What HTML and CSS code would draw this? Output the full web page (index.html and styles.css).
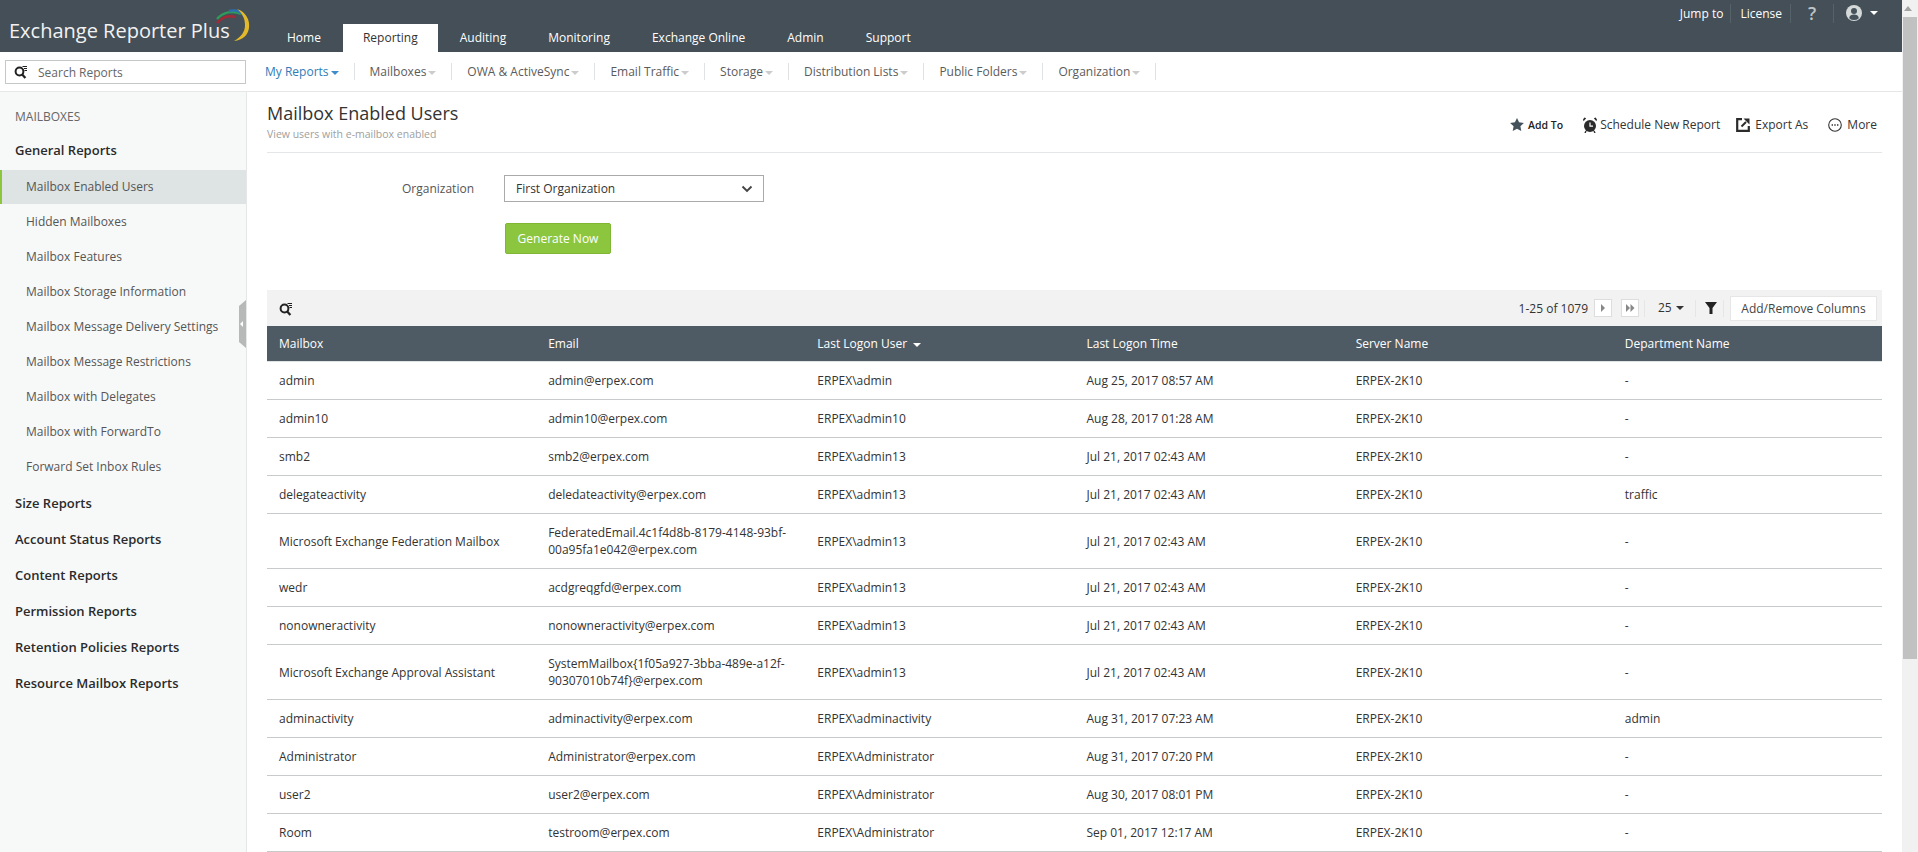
FILE: index.html
```html
<!DOCTYPE html>
<html lang="en">
<head>
<meta charset="utf-8">
<title>Exchange Reporter Plus</title>
<link rel="stylesheet" href="styles.css">
</head>
<body>
<div class="app">
  <div class="page">
    <header class="topbar">
      <div class="logo">
        <span class="logo-text">Exchange Reporter Plus</span>
        <svg class="logo-arc" width="38" height="36" viewBox="0 0 38 36" fill="none">
          <path d="M3 15C8 9 15 7 21 9" stroke="#a52a35" stroke-width="2.6"/>
          <path d="M3 11C9 4 19 2 27 6" stroke="#2f9a5b" stroke-width="2.4"/>
          <path d="M15 3C22 1 29 4 32 11" stroke="#2c6fb5" stroke-width="2.4"/>
          <path d="M23 1C32 4 36 12 35 20C34 27 29 32 20 33C27 29 31 24 31 17C31 10 28 5 23 1Z" fill="#e3b92b"/>
        </svg>
      </div>
      <nav class="tabs">
        <a class="tab">Home</a>
        <a class="tab tab-active">Reporting</a>
        <a class="tab">Auditing</a>
        <a class="tab">Monitoring</a>
        <a class="tab">Exchange Online</a>
        <a class="tab">Admin</a>
        <a class="tab">Support</a>
      </nav>
      <div class="tools">
        <a class="tool tool-jump">Jump to</a>
        <a class="tool tool-license">License</a>
        <a class="tool tool-help">?</a>
        <a class="tool tool-user">
          <svg width="16" height="16" viewBox="0 0 16 16">
            <circle cx="8" cy="8" r="8" fill="#d5dad9"/>
            <circle cx="8" cy="6" r="3" fill="#46535c"/>
            <path d="M3.2 13.2C3.6 10.4 5.6 9.6 8 9.6s4.4.8 4.8 3.6A7 7 0 0 1 3.2 13.2Z" fill="#46535c"/>
          </svg>
          <span class="caret caret-white"></span>
        </a>
      </div>
    </header>

    <div class="subbar">
      <div class="search-wrap">
        <div class="search">
          <svg class="search-icon" width="14" height="14" viewBox="0 0 14 14" fill="none">
            <circle cx="5.5" cy="6.5" r="3.9" stroke="#222" stroke-width="2"/>
            <path d="M8.2 9.4L11.4 13" stroke="#222" stroke-width="2.2"/>
            <path d="M8.5 1.5H13M10 3.5H13M10.5 5.5H13" stroke="#222" stroke-width="1"/>
          </svg>
          <span>Search Reports</span>
        </div>
      </div>
      <nav class="subnav">
        <a class="subitem subitem-active">My Reports<span class="caret caret-blue"></span></a>
        <a class="subitem">Mailboxes<span class="caret caret-grey"></span></a>
        <a class="subitem">OWA &amp; ActiveSync<span class="caret caret-grey"></span></a>
        <a class="subitem">Email Traffic<span class="caret caret-grey"></span></a>
        <a class="subitem">Storage<span class="caret caret-grey"></span></a>
        <a class="subitem">Distribution Lists<span class="caret caret-grey"></span></a>
        <a class="subitem">Public Folders<span class="caret caret-grey"></span></a>
        <a class="subitem">Organization<span class="caret caret-grey"></span></a>
      </nav>
    </div>

    <div class="body">
      <aside class="sidebar">
        <div class="side-title">MAILBOXES</div>
        <div class="side-head side-head-first">General Reports</div>
        <a class="side-item side-item-active">Mailbox Enabled Users</a>
        <a class="side-item">Hidden Mailboxes</a>
        <a class="side-item">Mailbox Features</a>
        <a class="side-item">Mailbox Storage Information</a>
        <a class="side-item">Mailbox Message Delivery Settings</a>
        <a class="side-item">Mailbox Message Restrictions</a>
        <a class="side-item">Mailbox with Delegates</a>
        <a class="side-item">Mailbox with ForwardTo</a>
        <a class="side-item">Forward Set Inbox Rules</a>
        <div class="side-head">Size Reports</div>
        <div class="side-head">Account Status Reports</div>
        <div class="side-head">Content Reports</div>
        <div class="side-head">Permission Reports</div>
        <div class="side-head">Retention Policies Reports</div>
        <div class="side-head">Resource Mailbox Reports</div>
        <div class="collapse"><span class="collapse-arrow"></span></div>
      </aside>

      <main class="main">
        <div class="title-row">
          <div>
            <h1 class="title">Mailbox Enabled Users</h1>
            <p class="subtitle">View users with e-mailbox enabled</p>
          </div>
          <div class="actions">
            <a class="action action-add">
              <svg width="14" height="13" viewBox="0 0 14 13"><path d="M7 0l2.1 4.3 4.8.7-3.500 3.300.9 4.700L7 10.800 2.700 13l.9-4.700L.1 5l4.800-.7z" fill="#44525c"/></svg>
              <span class="action-label-bold">Add To</span>
            </a>
            <a class="action action-schedule">
              <svg width="14" height="16" viewBox="0 0 14 16">
                <circle cx="7" cy="9" r="6" fill="#2b2b2b"/>
                <path d="M0.6 4.2L3.2 1.2 1.4 0.6 0 2.4ZM13.4 4.2L10.8 1.2 12.6 0.6 14 2.4Z" fill="#2b2b2b"/>
                <path d="M7 5.500V9.200H10" stroke="#fff" stroke-width="1.2" fill="none"/>
                <path d="M3 14L2 16M11 14L12 16" stroke="#2b2b2b" stroke-width="1.4"/>
              </svg>
              <span>Schedule New Report</span>
            </a>
            <a class="action action-export">
              <svg width="14" height="14" viewBox="0 0 14 14" fill="none">
                <path d="M6 1.200H1.200V12.800H12.800V8" stroke="#2b2b2b" stroke-width="2.2"/>
                <path d="M5.500 8.500L10 4" stroke="#2b2b2b" stroke-width="2"/>
                <path d="M7.500 0.500H13.500V6.500Z" fill="#2b2b2b"/>
              </svg>
              <span>Export As</span>
            </a>
            <a class="action action-more">
              <svg width="14" height="14" viewBox="0 0 14 14" fill="none">
                <circle cx="7" cy="7" r="6.300" stroke="#333" stroke-width="1.1"/>
                <path d="M3.600 7H5M6.300 7H7.700M9 7H10.400" stroke="#333" stroke-width="1.5"/>
              </svg>
              <span>More</span>
            </a>
          </div>
        </div>

        <div class="form-row">
          <label class="form-label">Organization</label>
          <div class="select">
            <span>First Organization</span>
            <svg width="12" height="8" viewBox="0 0 12 8" fill="none"><path d="M1.500 1.500L6 6l4.500-4.500" stroke="#444" stroke-width="1.9"/></svg>
          </div>
        </div>
        <button class="generate">Generate Now</button>

        <div class="toolbar">
          <svg class="toolbar-icon" width="14" height="14" viewBox="0 0 14 14" fill="none">
            <circle cx="5.500" cy="6.500" r="3.900" stroke="#222" stroke-width="2"/>
            <path d="M8.200 9.400L11.400 13" stroke="#222" stroke-width="2.2"/>
            <path d="M8.500 1.500H13M10 3.500H13M10.500 5.500H13" stroke="#222" stroke-width="1"/>
          </svg>
          <div class="pager">
            <span class="page-count">1-25 of 1079</span>
            <span class="page-btn"><svg width="6" height="8" viewBox="0 0 6 8"><path d="M1 0l4 4-4 4z" fill="#888"/></svg></span>
            <span class="page-btn page-btn-last"><svg width="9" height="8" viewBox="0 0 9 8"><path d="M0 0l4 4-4 4zM4.500 0l4 4-4 4z" fill="#888"/></svg></span>
            <span class="page-size">25<span class="caret caret-dark"></span></span>
            <span class="page-filter"><svg width="12" height="12" viewBox="0 0 12 12"><path d="M0 0h12L7.500 6v6h-3V6z" fill="#222"/></svg></span>
            <span class="page-columns">Add/Remove Columns</span>
          </div>
        </div>

        <table class="grid">
          <thead>
            <tr><th>Mailbox</th><th>Email</th><th>Last Logon User<span class="caret caret-white caret-sort"></span></th><th>Last Logon Time</th><th>Server Name</th><th>Department Name</th></tr>
          </thead>
          <tbody>
            <tr><td>admin</td><td>admin@erpex.com</td><td>ERPEX\admin</td><td>Aug 25, 2017 08:57 AM</td><td>ERPEX-2K10</td><td>-</td></tr>
            <tr><td>admin10</td><td>admin10@erpex.com</td><td>ERPEX\admin10</td><td>Aug 28, 2017 01:28 AM</td><td>ERPEX-2K10</td><td>-</td></tr>
            <tr><td>smb2</td><td>smb2@erpex.com</td><td>ERPEX\admin13</td><td>Jul 21, 2017 02:43 AM</td><td>ERPEX-2K10</td><td>-</td></tr>
            <tr><td>delegateactivity</td><td>deledateactivity@erpex.com</td><td>ERPEX\admin13</td><td>Jul 21, 2017 02:43 AM</td><td>ERPEX-2K10</td><td>traffic</td></tr>
            <tr><td>Microsoft Exchange Federation Mailbox</td><td>FederatedEmail.4c1f4d8b-8179-4148-93bf-00a95fa1e042@erpex.com</td><td>ERPEX\admin13</td><td>Jul 21, 2017 02:43 AM</td><td>ERPEX-2K10</td><td>-</td></tr>
            <tr><td>wedr</td><td>acdgreqgfd@erpex.com</td><td>ERPEX\admin13</td><td>Jul 21, 2017 02:43 AM</td><td>ERPEX-2K10</td><td>-</td></tr>
            <tr><td>nonowneractivity</td><td>nonowneractivity@erpex.com</td><td>ERPEX\admin13</td><td>Jul 21, 2017 02:43 AM</td><td>ERPEX-2K10</td><td>-</td></tr>
            <tr><td>Microsoft Exchange Approval Assistant</td><td>SystemMailbox{1f05a927-3bba-489e-a12f-90307010b74f}@erpex.com</td><td>ERPEX\admin13</td><td>Jul 21, 2017 02:43 AM</td><td>ERPEX-2K10</td><td>-</td></tr>
            <tr><td>adminactivity</td><td>adminactivity@erpex.com</td><td>ERPEX\adminactivity</td><td>Aug 31, 2017 07:23 AM</td><td>ERPEX-2K10</td><td>admin</td></tr>
            <tr><td>Administrator</td><td>Administrator@erpex.com</td><td>ERPEX\Administrator</td><td>Aug 31, 2017 07:20 PM</td><td>ERPEX-2K10</td><td>-</td></tr>
            <tr><td>user2</td><td>user2@erpex.com</td><td>ERPEX\Administrator</td><td>Aug 30, 2017 08:01 PM</td><td>ERPEX-2K10</td><td>-</td></tr>
            <tr><td>Room</td><td>testroom@erpex.com</td><td>ERPEX\Administrator</td><td>Sep 01, 2017 12:17 AM</td><td>ERPEX-2K10</td><td>-</td></tr>
          </tbody>
        </table>
      </main>
    </div>
  </div>
  <div class="scrollbar" aria-hidden="true">
    <span class="scroll-up"></span>
    <span class="scroll-thumb"></span>
  </div>
</div>
</body>
</html>
```
FILE: styles.css
```css
* { box-sizing: border-box; }
html, body { margin: 0; height: 100%; overflow: hidden; }
body { font-family: "Open Sans", "Liberation Sans", sans-serif; font-size: 12px; color: #333; background: #fff; }
a { color: inherit; text-decoration: none; }

.app { display: flex; height: 852px; }
.page { flex: 1; min-width: 0; height: 852px; overflow: hidden; display: flex; flex-direction: column; }

.scrollbar { width: 16px; flex: none; background: #f1f1f1; display: flex; flex-direction: column; align-items: flex-end; }
.scroll-up { width: 0; height: 0; margin: 6px 4px 6px 0; border-left: 4px solid transparent; border-right: 4px solid transparent; border-bottom: 5px solid #a3a3a3; align-self: center; }
.scroll-thumb { width: 14px; margin-right: 1px; height: 642px; background: #c1c1c1; }

.caret { display: inline-block; width: 0; height: 0; border-left: 4px solid transparent; border-right: 4px solid transparent; border-top: 4px solid #ccc; vertical-align: middle; }
.caret-blue { border-top-color: #3f8bc9; margin-left: 2px; }
.caret-grey { border-top-color: #ccc; margin-left: 2px; }
.caret-white { border-top-color: #fff; }
.caret-dark { border-top-color: #333; margin-left: 4px; }
.caret-sort { margin-left: 6px; }

.topbar { height: 52px; flex: none; background: #444f57; display: flex; color: #fff; }
.logo { width: 267px; flex: none; display: flex; align-items: flex-start; padding: 17px 0 0 9px; }
.logo-text { font-size: 20px; font-weight: 500; line-height: 27px; color: #f2f2f2; white-space: nowrap; }
.logo-arc { margin: -9px 0 0 -16px; flex: none; }
.tabs { display: flex; gap: 2px; align-self: flex-end; height: 28px; }
.tab { padding: 0 20px; line-height: 28px; color: #fff; white-space: nowrap; }
.tab-active { background: #fff; color: #333; }
.tools { margin-left: auto; height: 26px; display: flex; align-items: center; padding-right: 24px; }
.tool { display: flex; align-items: center; height: 19px; white-space: nowrap; border-right: 1px solid #56626a; }
.tool-jump { padding-right: 7px; }
.tool-license { padding: 0 8px 0 9px; }
.tool-help { font-size: 18px; font-weight: 600; width: 43px; justify-content: center; color: #bfc4c6; }
.tool-user { border-right: 0; padding-left: 12px; gap: 8px; }

.subbar { height: 40px; flex: none; display: flex; border-bottom: 1px solid #e4e6e7; }
.search-wrap { width: 250px; flex: none; padding: 8px 0 0 5px; }
.search { width: 241px; height: 24px; border: 1px solid #c4c8c9; display: flex; align-items: center; gap: 10px; padding-left: 8px; color: #666; }
.subnav { display: flex; align-items: center; height: 39px; }
.subitem { height: 17px; line-height: 17px; padding: 0 15px; border-right: 1px solid #e0e2e3; color: #5b5b5b; white-space: nowrap; }
.subitem-active { color: #2f7cb8; }

.body { flex: 1; min-height: 0; display: flex; }
.sidebar { width: 247px; flex: none; position: relative; background: #f7f9f9; border-right: 1px solid #e4e6e7; }
.side-title { height: 33px; padding: 16px 0 0 15px; line-height: 17px; color: #666; }
.side-head { height: 36px; line-height: 36px; padding-left: 15px; font-weight: 600; font-size: 13px; color: #2b2b2b; }
.side-head-first { height: 45px; line-height: 51px; }
.side-item + .side-head { margin-top: 1px; }
.side-item { display: block; height: 35px; line-height: 35px; padding-left: 26px; color: #555; }
.side-item-active { background: #dde4e3; border-left: 2px solid #8cc63f; padding-left: 24px; height: 34px; line-height: 34px; }
.collapse { position: absolute; right: 0; top: 208px; width: 7px; height: 48px; background: #b7b9b9; clip-path: polygon(0 6px, 100% 0, 100% 100%, 0 calc(100% - 6px)); display: flex; align-items: center; }
.collapse-arrow { width: 0; height: 0; border-top: 3px solid transparent; border-bottom: 3px solid transparent; border-right: 3px solid #fff; margin-left: 1px; }

.main { flex: 1; min-width: 0; padding: 0 20px; }
.title-row { height: 61px; display: flex; justify-content: space-between; border-bottom: 1px solid #e4e6e7; padding-top: 9px; }
.title { margin: 0; font-size: 18px; font-weight: 400; line-height: 24px; color: #333; }
.subtitle { margin: 2px 0 0; font-size: 10.500px; line-height: 15px; color: #a0a0a0; }
.actions { display: flex; align-items: center; height: 47px; padding-right: 5px; }
.action { display: flex; align-items: center; gap: 5px; white-space: nowrap; color: #333; }
.action-add { gap: 4px; }
.action-schedule { margin-left: 20px; gap: 3px; }
.action-export { margin-left: 16px; }
.action-more { margin-left: 20px; }
.action-label-bold { font-size: 10.500px; font-weight: 600; color: #222; }

.form-row { display: flex; align-items: center; gap: 30px; margin-top: 22px; height: 27px; }
.form-label { width: 207px; text-align: right; color: #555; }
.select { width: 260px; height: 27px; border: 1px solid #aaa; display: flex; align-items: center; justify-content: space-between; padding: 0 10px 0 11px; color: #333; }
.generate { display: block; margin: 21px 0 0 238px; width: 106px; height: 31px; border: 1px solid #7fb735; border-radius: 2px; background: #8cc63f; color: #fff; font: 12px "Open Sans", sans-serif; padding: 0; }

.toolbar { margin-top: 36px; height: 36px; background: #f2f2f2; display: flex; align-items: center; justify-content: space-between; padding: 0 5px 0 12px; }
.toolbar-icon { margin-top: 2px; }
.pager { display: flex; align-items: center; height: 25px; }
.page-count { margin-right: 6px; line-height: 17px; padding-top: 1px; }
.page-btn { width: 18px; height: 18px; background: #fff; border: 1px solid #ddd; display: flex; align-items: center; justify-content: center; }
.page-btn-last { margin-left: 9px; }
.page-size { margin-left: 5px; padding-left: 13px; width: 51px; height: 17px; line-height: 15px; border-left: 1px solid #e6e6e6; }
.page-filter { display: flex; width: 29px; height: 17px; align-items: center; padding-left: 9px; border-left: 1px solid #e6e6e6; border-right: 1px solid #e6e6e6; }
.page-columns { margin-left: 6px; width: 147px; height: 25px; line-height: 23px; text-align: center; background: #fff; border: 1px solid #e6e6e6; color: #444; }

.grid { width: 1615px; table-layout: fixed; border-collapse: separate; border-spacing: 0; }
.grid th { height: 36px; padding: 0 12px; background: #4f5b64; color: #fff; font-weight: 400; text-align: left; border-bottom: 1px solid #dfe2e3; }
.grid td { padding: 10px 12px; line-height: 17px; border-bottom: 1px solid #c8cbcc; color: #333; }
```
